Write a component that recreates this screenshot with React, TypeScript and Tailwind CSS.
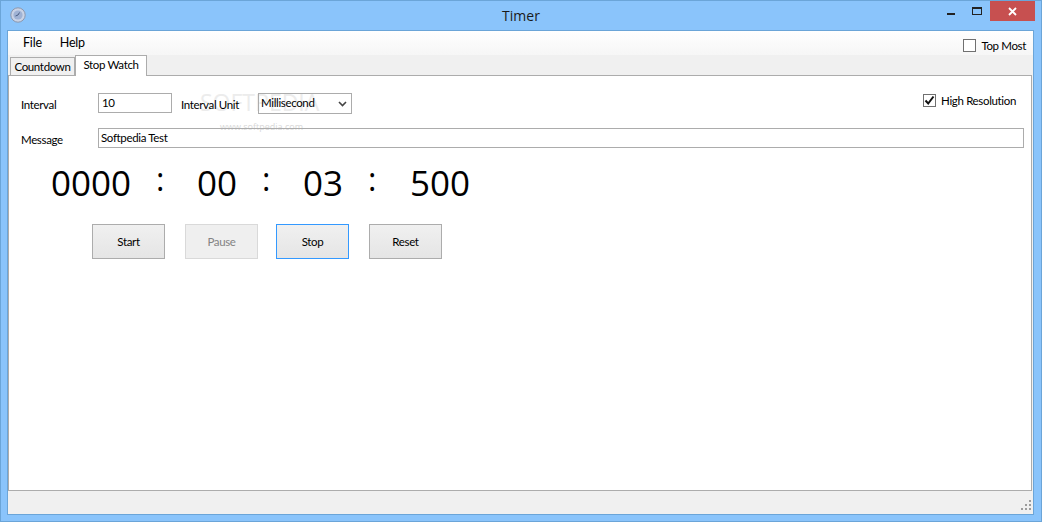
const uiText = "text-[11.5px] tracking-[-0.35px] font-['Lato',sans-serif]";

function WinButton({ label, disabled, focused }: { label: string; disabled?: boolean; focused?: boolean }) {
  let look = 'border-[#acacac] bg-gradient-to-b from-[#f0f0f0] to-[#e5e5e5] text-black';
  if (disabled) look = 'border-[#d9d9d9] bg-[#efefef] text-[#838383]';
  if (focused) look = 'border-[#3399ff] bg-gradient-to-b from-[#f0f0f0] to-[#e5e5e5] text-black';
  return (
    <button className={`w-[73px] h-[35px] border ${uiText} ${look}`}>{label}</button>
  );
}

function Check({ checked }: { checked?: boolean }) {
  return (
    <div className="w-[13px] h-[13px] border border-[#707070] bg-white flex items-center justify-center">
      {checked && (
        <svg width="11" height="11" viewBox="0 0 11 11">
          <path d="M1.5 5.5 L4.2 8.5 L9.5 1.5" fill="none" stroke="#111" strokeWidth="2" />
        </svg>
      )}
    </div>
  );
}

function ClockIcon() {
  return (
    <svg width="16" height="16" viewBox="0 0 16 16">
      <circle cx="8" cy="8" r="7.2" fill="#c9d3e6" stroke="#8d97ad" />
      <circle cx="8" cy="8" r="4.6" fill="#9fb2d4" />
      <path d="M8 8 L9.5 5.5 M8 8 L5.5 9" stroke="#4c5f85" strokeWidth="1" />
    </svg>
  );
}

export default function App() {
  return (
    <div className="w-[1042px] h-[522px] bg-[#8ac4fb] border border-[#6ba5d8] flex flex-col overflow-hidden text-black font-['Open_Sans',sans-serif]">
      {/* title bar */}
      <div className="h-[29px] shrink-0 flex items-start relative">
        <div className="ml-[9px] mt-[6px]">
          <ClockIcon />
        </div>
        <div className="absolute left-0 right-0 top-[4px] text-center text-[14px] text-[#1a1a1a]">Timer</div>
        <div className="ml-auto mr-[6px] flex items-start">
          <div className="w-[8px] h-[2px] bg-[#222] mt-[12px] mr-[17px]" />
          <div className="w-[10px] h-[8px] border border-[#222] border-t-2 mt-[6px] mr-[8px]" />
          <div className="w-[45px] h-[20px] bg-[#c75050] flex items-center justify-center">
            <svg width="9" height="9" viewBox="0 0 9 9">
              <path d="M1 1 L8 8 M8 1 L1 8" stroke="#fff" strokeWidth="1.8" />
            </svg>
          </div>
        </div>
      </div>

      {/* client area */}
      <div className="ml-[6px] mr-[7px] mb-[6px] flex-1 flex flex-col bg-[#f0f0f0] border border-[#6ba5d8] min-h-0">
        <div className="h-[24px] shrink-0 bg-gradient-to-b from-white to-[#f6f6f6] flex items-center relative">
          <span className="ml-[15px] text-[12.5px] tracking-[-0.2px] font-['Lato',sans-serif]">File</span>
          <span className="ml-[18px] text-[12.5px] tracking-[-0.2px] font-['Lato',sans-serif]">Help</span>
          <div className="ml-auto mr-[7px] mt-[5px] flex items-center gap-[5px]">
            <Check />
            <span className={uiText}>Top Most</span>
          </div>
        </div>

        {/* tabs */}
        <div className="h-[20px] shrink-0 flex items-end pl-[2px] relative z-10">
          <div className={`w-[65px] h-[18px] bg-[#f0f0f0] border border-[#acacac] border-b-0 text-center leading-[17px] ${uiText}`}>
            Countdown
          </div>
          <div className={`w-[72px] h-[21px] -mb-px bg-white border border-[#acacac] border-b-0 text-center leading-[18px] ${uiText}`}>
            Stop Watch
          </div>
        </div>

        {/* tab page */}
        <div className="flex-1 min-h-0 mr-[1px] bg-white border border-[#acacac] relative pl-[12px] pt-[17px]">
          {/* watermark behind the form */}
          <div className="absolute left-[191px] top-[15px] text-[23px] text-[#ececec] leading-none pointer-events-none">SOFTPEDIA</div>
          <div className="absolute left-[211px] top-[46px] text-[9px] text-[#d8d8d8] leading-none pointer-events-none">www.softpedia.com</div>

          <div className="flex items-start h-[21px] relative">
            <span className={`w-[77px] mt-[3px] ${uiText}`}>Interval</span>
            <div className={`w-[74px] h-[20px] border border-[#acacac] px-[3px] leading-[17px] ${uiText}`}>10</div>
            <span className={`ml-[9px] w-[77px] mt-[3px] ${uiText}`}>Interval Unit</span>
            <div className={`w-[94px] h-[21px] border border-[#acacac] pl-[2px] flex items-center justify-between pr-[4px] ${uiText}`}>
              <span className="-mt-[2px]">Millisecond</span>
              <svg width="9" height="6" viewBox="0 0 9 6">
                <path d="M1 1 L4.5 4.5 L8 1" fill="none" stroke="#444" strokeWidth="1.6" />
              </svg>
            </div>
            <div className="ml-auto mr-[15px] -mt-[1px] flex items-center gap-[5px]">
              <Check checked />
              <span className={uiText}>High Resolution</span>
            </div>
          </div>

          <div className="flex items-start mt-[14px] pr-[7px] h-[20px] relative">
            <span className={`w-[77px] mt-[3px] ${uiText}`}>Message</span>
            <div className={`flex-1 h-[20px] border border-[#acacac] px-[2px] leading-[17px] ${uiText}`}>Softpedia Test</div>
          </div>

          {/* counter */}
          <div className="flex items-start mt-[13px] ml-[30px] h-[44px] text-[35px] leading-[44px]">
            <span className="w-[78px]">0000</span>
            <span className="w-[68px] pl-[27px] text-[32px] leading-[36px]">:</span>
            <span className="w-[40px]">00</span>
            <span className="w-[66px] pl-[25px] text-[32px] leading-[36px]">:</span>
            <span className="w-[38px]">03</span>
            <span className="w-[69px] pl-[27px] text-[32px] leading-[36px]">:</span>
            <span className="w-[60px]">500</span>
          </div>

          {/* buttons */}
          <div className="flex mt-[19px] ml-[71px]">
            <WinButton label="Start" />
            <div className="w-[20px]" />
            <WinButton label="Pause" disabled />
            <div className="w-[18px]" />
            <WinButton label="Stop" focused />
            <div className="w-[20px]" />
            <WinButton label="Reset" />
          </div>
        </div>

        {/* status strip */}
        <div className="h-[23px] shrink-0 bg-[#f0f0f0] flex items-end justify-end pr-[1px] pb-[3px]">
          <svg width="11" height="11" viewBox="0 0 11 11">
            <g fill="#9c9c9c">
              <rect x="8" y="0" width="2" height="2" />
              <rect x="4" y="4" width="2" height="2" />
              <rect x="8" y="4" width="2" height="2" />
              <rect x="0" y="8" width="2" height="2" />
              <rect x="4" y="8" width="2" height="2" />
              <rect x="8" y="8" width="2" height="2" />
            </g>
          </svg>
        </div>
      </div>
    </div>
  );
}
